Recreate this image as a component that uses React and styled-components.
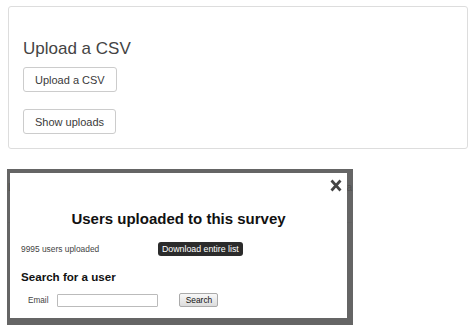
import React from 'react'
import styled, { createGlobalStyle } from 'styled-components'

const GlobalStyle = createGlobalStyle`
    body {
        margin: 0;
        background: #fff;
        font-family: "Liberation Sans", Arial, sans-serif;
    }
`

function CloseIcon() {
    return (
        <svg width="12" height="13" viewBox="0 0 12 13">
            <path d="M1.5 1.5 L10.5 11.5 M10.5 1.5 L1.5 11.5" stroke="#444" strokeWidth="2.7" strokeLinecap="butt" fill="none" />
        </svg>
    )
}

function App() {
    return (
        <Page>
            <GlobalStyle />
            <Panel>
                <Heading>Upload a CSV</Heading>
                <Buttons>
                    <Button>Upload a CSV</Button>
                    <Button>Show uploads</Button>
                </Buttons>
            </Panel>

            <BehindRow>
                <span>Last upload</span>
                <span>Via</span>
            </BehindRow>

            <Modal>
                <Close aria-label="Close"><CloseIcon /></Close>
                <Title>Users uploaded to this survey</Title>
                <InfoRow>
                    <Count>9995 users uploaded</Count>
                    <Pill>Download entire list</Pill>
                </InfoRow>
                <SubTitle>Search for a user</SubTitle>
                <SearchRow>
                    <Label>Email</Label>
                    <Input type="text" />
                    <SearchButton>Search</SearchButton>
                </SearchRow>
            </Modal>
        </Page>
    )
}

export default App

const Page = styled.div`
    position: relative;
    height: 331px;
    padding: 6px 7px 0 8px;
    box-sizing: border-box;
    overflow: hidden;
`

const Panel = styled.div`
    width: 460px;
    box-sizing: border-box;
    border: 1px solid #dddddd;
    border-radius: 3px;
    padding: 32px 14px 14px;
    display: flex;
    flex-direction: column;
    align-items: flex-start;
`

const Heading = styled.h3`
    margin: 0 0 8px;
    font-size: 17px;
    line-height: 20px;
    font-weight: normal;
    color: #444;
`

const Buttons = styled.div`
    display: flex;
    flex-direction: column;
    align-items: flex-start;
    gap: 17px;
`

const Button = styled.button`
    height: 25px;
    padding: 0 11px;
    background: #fff;
    border: 1px solid #cccccc;
    border-radius: 3px;
    font-family: inherit;
    font-size: 11px;
    color: #3a3a3a;
    cursor: pointer;
`

const BehindRow = styled.div`
    width: 344px;
    margin-top: 33px;
    padding-bottom: 28px;
    border-bottom: 1px solid #dddddd;
    display: flex;
    justify-content: space-between;
    font-size: 10px;
    line-height: 12px;
    color: #555;
`

const Modal = styled.div`
    position: absolute;
    left: 7px;
    top: 169px;
    width: 346px;
    height: 156px;
    box-sizing: border-box;
    background: #fff;
    background-clip: padding-box;
    border-style: solid;
    border-color: rgba(80, 80, 80, 0.88);
    border-width: 4px 6px 7px 3px;
    padding-top: 37px;
`

const Close = styled.button`
    position: absolute;
    top: 6px;
    right: 5px;
    width: 12px;
    height: 13px;
    padding: 0;
    border: 0;
    background: none;
    display: flex;
    cursor: pointer;
`

const Title = styled.h2`
    margin: 0;
    font-size: 15px;
    line-height: 17px;
    font-weight: bold;
    text-align: center;
    color: #111;
`

const InfoRow = styled.div`
    display: grid;
    grid-template-columns: 137px auto;
    justify-content: start;
    align-items: center;
    margin-top: 15px;
    padding-left: 11px;
`

const Count = styled.span`
    font-size: 8.4px;
    color: #444;
`

const Pill = styled.span`
    height: 14px;
    line-height: 14px;
    padding: 0 4px;
    background: #2b2b2b;
    border-radius: 3px;
    color: #fff;
    font-size: 8.8px;
`

const SubTitle = styled.h4`
    margin: 14px 0 0;
    padding-left: 11px;
    font-size: 11.6px;
    line-height: 13px;
    font-weight: bold;
    color: #111;
`

const SearchRow = styled.div`
    display: flex;
    align-items: center;
    margin-top: 10px;
    padding-left: 18px;
`

const Label = styled.label`
    font-size: 8.2px;
    color: #444;
`

const Input = styled.input`
    width: 101px;
    height: 13px;
    box-sizing: border-box;
    margin: 0 0 0 9px;
    padding: 0 2px;
    border: 1px solid #bbbbbb;
    border-radius: 1px;
    font-size: 8px;
`

const SearchButton = styled.button`
    width: 39px;
    height: 14px;
    margin-left: 21px;
    padding: 0;
    border: 1px solid #aaaaaa;
    border-radius: 2px;
    background: linear-gradient(#f8f8f8, #dcdcdc);
    font-family: inherit;
    font-size: 8.4px;
    color: #111;
`
